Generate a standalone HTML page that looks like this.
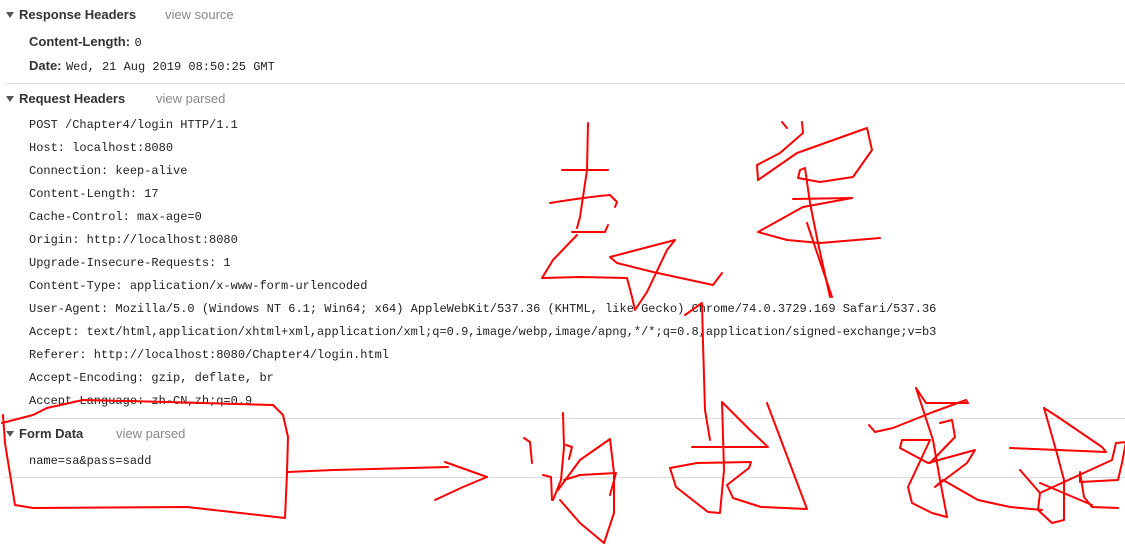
<!DOCTYPE html>
<html><head><meta charset="utf-8"><style>
body{margin:0;width:1125px;height:544px;background:#fff;position:relative;overflow:hidden;font-family:"Liberation Sans",sans-serif;color:#222}
.t{position:absolute;white-space:pre;line-height:14px}
.h{font-weight:bold;font-size:13px;color:#333}
.v{font-size:13px;color:#888}
.m{font-family:"Liberation Mono",monospace;font-size:12px;color:#222}
.k{font-weight:bold;font-size:13px;color:#333}
.tri{position:absolute;width:0;height:0;border-left:4px solid transparent;border-right:4px solid transparent;border-top:6px solid #555}
.sep{position:absolute;left:6px;right:0;height:1px;background:#ddd}
</style></head><body>
<div class="tri" style="left:6px;top:12px"></div>
<div class="t h" style="left:19px;top:8px">Response Headers</div>
<div class="t v" style="left:165px;top:8px">view source</div>
<div class="t" style="left:29px;top:35px"><span class="k">Content-Length:</span> <span class="m">0</span></div>
<div class="t" style="left:29px;top:59px"><span class="k">Date:</span> <span class="m">Wed, 21 Aug 2019 08:50:25 GMT</span></div>
<div class="sep" style="top:83px"></div>
<div class="tri" style="left:6px;top:96px"></div>
<div class="t h" style="left:19px;top:92px">Request Headers</div>
<div class="t v" style="left:156px;top:92px">view parsed</div>
<div class="t m" style="left:29px;top:114px;line-height:23px">POST /Chapter4/login HTTP/1.1
Host: localhost:8080
Connection: keep-alive
Content-Length: 17
Cache-Control: max-age=0
Origin: http://localhost:8080
Upgrade-Insecure-Requests: 1
Content-Type: application/x-www-form-urlencoded
User-Agent: Mozilla/5.0 (Windows NT 6.1; Win64; x64) AppleWebKit/537.36 (KHTML, like Gecko) Chrome/74.0.3729.169 Safari/537.36
Accept: text/html,application/xhtml+xml,application/xml;q=0.9,image/webp,image/apng,*/*;q=0.8,application/signed-exchange;v=b3
Referer: http://localhost:8080/Chapter4/login.html
Accept-Encoding: gzip, deflate, br
Accept-Language: zh-CN,zh;q=0.9</div>
<div class="sep" style="top:418px"></div>
<div class="tri" style="left:6px;top:431px"></div>
<div class="t h" style="left:19px;top:427px">Form Data</div>
<div class="t v" style="left:116px;top:427px">view parsed</div>
<div class="t m" style="left:29px;top:454px">name=sa&amp;pass=sadd</div>
<div class="sep" style="top:477px"></div>
<svg width="1125" height="544" style="position:absolute;left:0;top:0" fill="none" stroke="#f00" stroke-width="2" stroke-linecap="round" stroke-linejoin="round">
<path d="M2,423 L33,415 L47,408 L83,400 L167,402 L273,405 L283,415 L288,437 L287,473 L285,518 L187,507 L33,508 L15,505 L5,443 L3,415"/>
<path d="M288,472 L333,470 L448,467"/>
<path d="M445,462 L487,477 L463,487 L435,500"/>
<path d="M588,123 L587,170 L580,217 L577,228"/>
<path d="M562,170 L608,170"/>
<path d="M550,203 Q587,197 610,195 L617,202 L615,207"/>
<path d="M572,232 L605,232 L608,225"/>
<path d="M577,235 L553,260 L542,278 L580,277 L627,278 L632,297 L635,310 L647,292 L667,250 L675,240 L610,257 L617,263 L653,272 L713,285 L722,273"/>
<path d="M685,315 L702,303 L703,343 L705,410 L710,440"/>
<path d="M782,122 L787,128"/>
<path d="M802,122 L803,133 L780,153 L757,165 L758,180 L797,153 L867,128 L872,150 L853,177 L820,182 L798,178 L800,170 L805,168 L810,203 L818,243 L830,297"/>
<path d="M793,199 L852,198"/>
<path d="M852,198 L803,207 L758,232 L787,240 L820,243 L880,238"/>
<path d="M807,223 L832,297"/>
<path d="M524,438 L530,442 L532,463"/>
<path d="M563,413 L564,447 L561,480 L553,500"/>
<path d="M566,445 L572,447 L569,459"/>
<path d="M543,475 L551,477 L552,500"/>
<path d="M558,490 L580,460 L610,439 L614,473 L614,513 L604,543 L580,523 L560,500"/>
<path d="M564,480 L580,475 L616,473 L610,495"/>
<path d="M692,447 L768,447 L750,430 L722,402 L724,470 L720,513 L708,512 L676,487 L670,468 L697,463 L751,462 L749,468 L727,485 L733,498 L761,507 L807,509 L767,403"/>
<path d="M869,425 L875,432 L893,428 L933,412 L966,400 L968,403 L926,403 L916,388"/>
<path d="M916,388 L933,440 L940,480 L947,517 L932,513 L912,503 L908,487 L930,440 L902,440 L900,448 L928,463 L975,450 L967,463 L935,487 L943,480 L978,500 L1010,507 L1042,510"/>
<path d="M940,423 L952,420 L955,437 L930,463"/>
<path d="M1044,408 L1058,417 L1102,447 L1106,452 L1010,448"/>
<path d="M1044,408 L1056,450 L1064,480 L1064,520 L1052,523 L1038,510 L1040,493 L1112,460 L1116,443 L1126,442 L1122,463 L1118,480 L1080,482 L1080,472 L1084,497 L1092,507 L1118,508"/>
<path d="M1020,470 L1040,493"/>
<path d="M1040,483 L1092,505"/>
</svg>
</body></html>
